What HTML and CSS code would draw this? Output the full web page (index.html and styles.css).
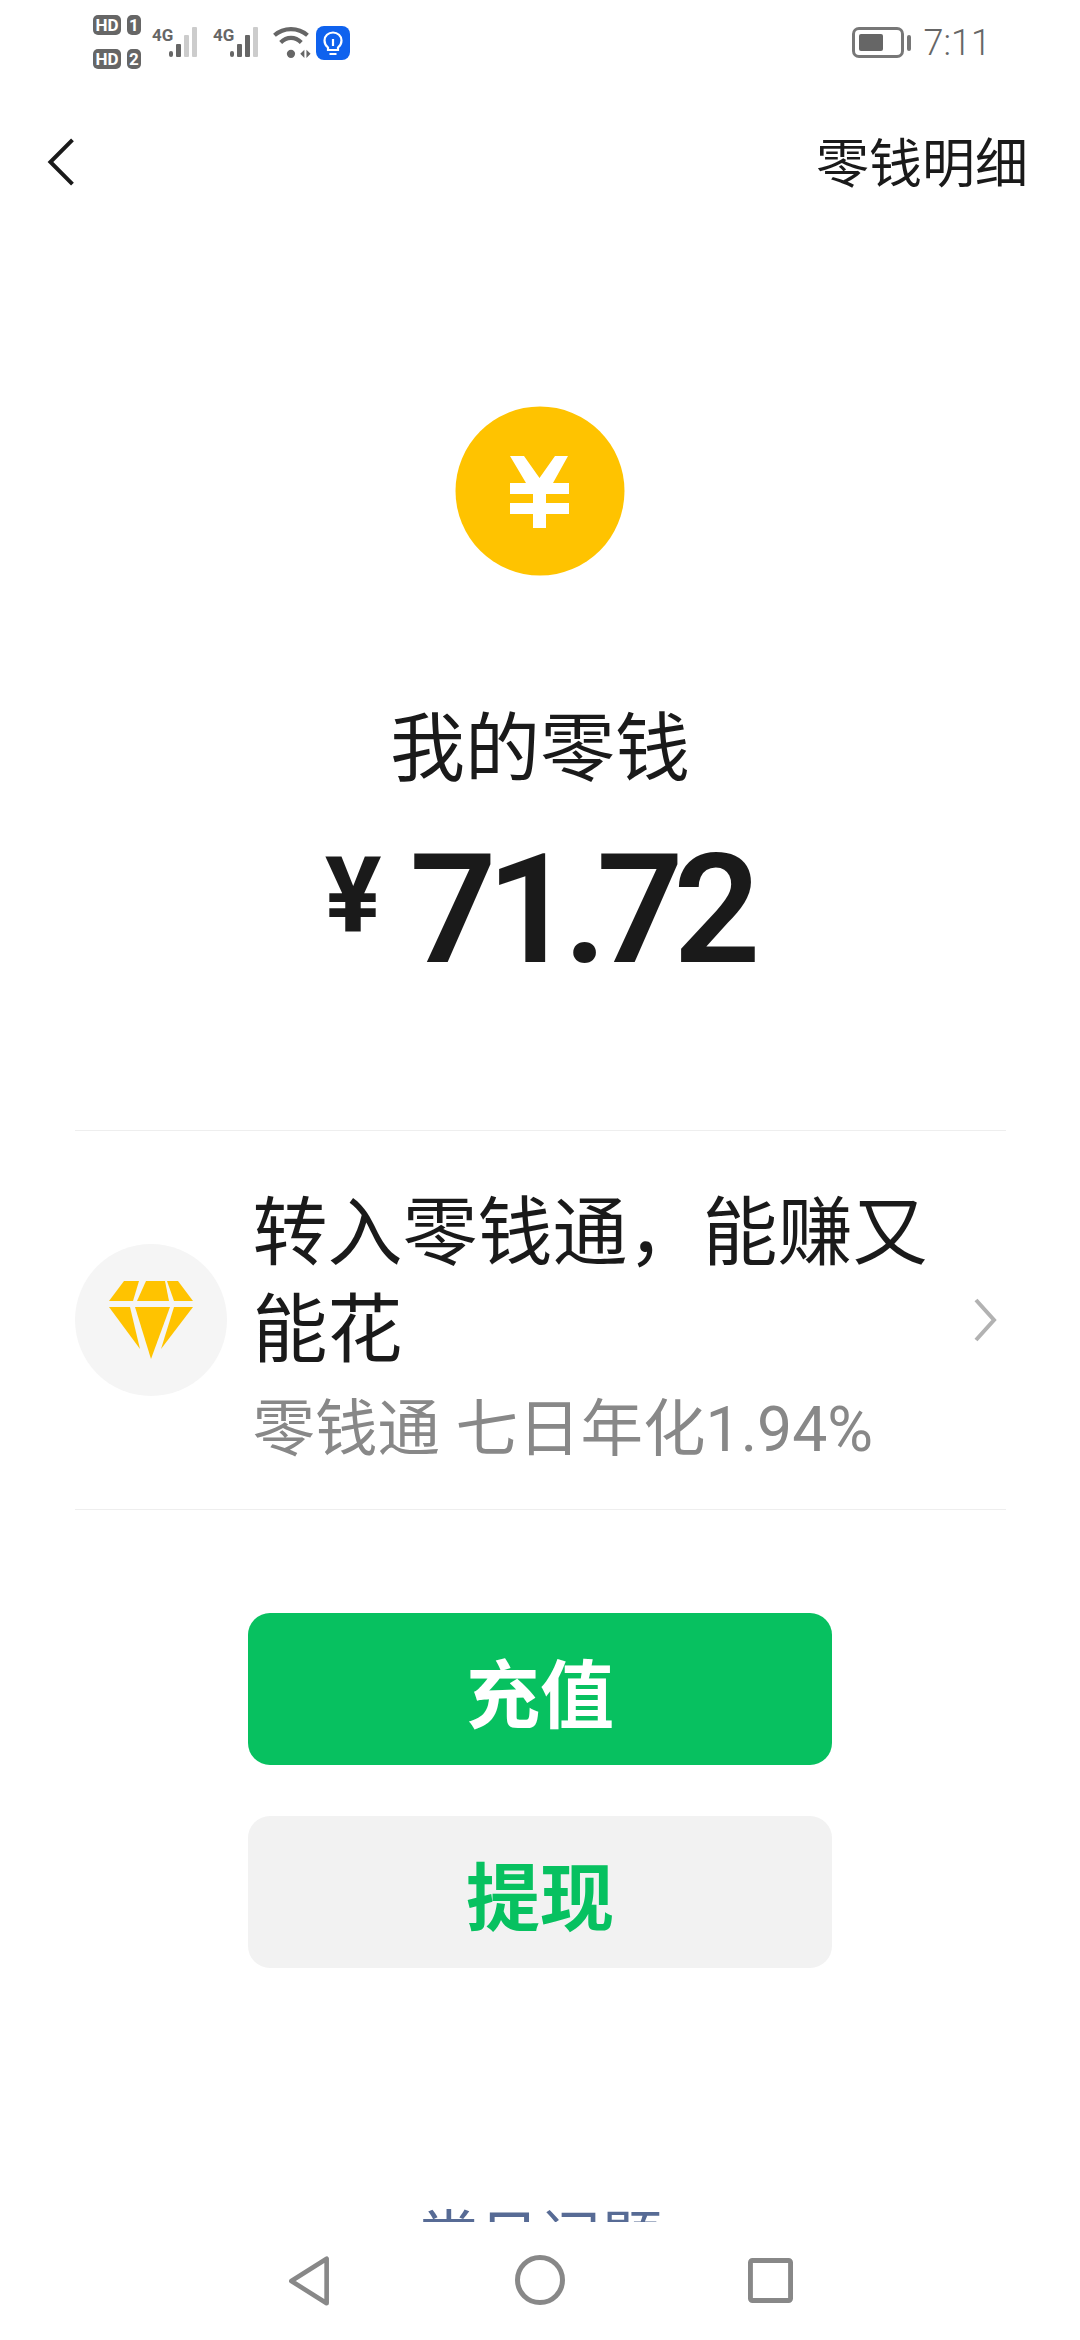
FILE: index.html
```html
<!DOCTYPE html>
<html lang="zh-CN">
<head>
  <meta charset="UTF-8" />
  <title>我的零钱</title>
  <link rel="stylesheet" href="styles.css">
</head>
<body>
  <div class="status-bar">
    <div class="status-left">
      <div class="sim-tags">
        <div class="sim-row"><span class="hd">HD</span><span class="sim-no">1</span></div>
        <div class="sim-row"><span class="hd">HD</span><span class="sim-no">2</span></div>
      </div>
      <div class="signal">
        <span class="net">4G</span>
        <svg class="bars" viewBox="0 0 32 32">
          <rect x="0" y="24" width="4" height="6" rx="2" fill="#666"/>
          <rect x="7" y="17" width="5" height="13" rx="1" fill="#666"/>
          <rect x="15" y="8" width="5" height="22" rx="1" fill="#ccc"/>
          <rect x="23" y="0" width="5" height="30" rx="1" fill="#ccc"/>
        </svg>
      </div>
      <div class="signal">
        <span class="net">4G</span>
        <svg class="bars" viewBox="0 0 32 32">
          <rect x="0" y="24" width="4" height="6" rx="2" fill="#666"/>
          <rect x="7" y="17" width="5" height="13" rx="1" fill="#666"/>
          <rect x="15" y="8" width="5" height="22" rx="1" fill="#666"/>
          <rect x="23" y="0" width="5" height="30" rx="1" fill="#ccc"/>
        </svg>
      </div>
      <svg class="wifi" viewBox="0 0 38 32">
        <path d="M2 9C11 1 25 1 34 9" fill="none" stroke="#666" stroke-width="4"/>
        <path d="M8 16C14 10 22 10 28 16" fill="none" stroke="#666" stroke-width="4"/>
        <circle cx="18" cy="27" r="4" fill="#666"/>
        <path d="M27 27l4-4v8zM37 27l-4-4v8z" fill="#666"/>
      </svg>
      <svg class="bulb" viewBox="0 0 34 34">
        <rect width="34" height="34" rx="8" fill="#0f62ee"/>
        <path d="M12 21.500C9.500 19.500 8.500 17 8.500 14.500C8.500 10 12.300 6.500 17 6.500S25.500 10 25.500 14.500C25.500 17 24.500 19.500 22 21.500V24H12Z" fill="none" stroke="#fff" stroke-width="2.200"/>
        <path d="M13.500 28H20.500M17 13V20" fill="none" stroke="#fff" stroke-width="2.200"/>
      </svg>
    </div>
    <div class="status-right">
      <div class="battery"><div class="battery-level"></div></div>
      <div class="battery-tip"></div>
      <span class="time">7:11</span>
    </div>
  </div>

  <div class="top-bar">
    <svg class="back" viewBox="0 0 34 56">
      <path d="M30 3L5 28L30 53" fill="none" stroke="#1a1a1a" stroke-width="4.500"/>
    </svg>
    <span class="detail-link">零钱明细</span>
  </div>

  <div class="content">
    <svg class="coin" viewBox="0 0 170 170">
      <circle cx="85" cy="85" r="84.500" fill="#ffc300"/>
      <path d="M55 50H69L84.500 72L100 50H113L98 77H114V88H91V97H114V108H91V122H78V108H55V97H78V88H55V77H71Z" fill="#fff"/>
    </svg>
    <div class="balance-label">我的零钱</div>
    <div class="balance"><span class="yen">¥</span><span class="amount">71.72</span></div>

    <div class="promo">
      <div class="promo-icon">
        <svg class="diamond" viewBox="0 0 84 78">
          <path d="M15 0H30L24 20H0Z" fill="#ffc300"/>
          <path d="M37 0H56L60 20H28Z" fill="#ffc300"/>
          <path d="M58 0H69L84 20H65Z" fill="#ffc300"/>
          <path d="M0 26H21L31 68Z" fill="#ffc300"/>
          <path d="M26 26H61L42 78Z" fill="#ffc300"/>
          <path d="M65 26H84L52 68Z" fill="#ffc300"/>
        </svg>
      </div>
      <div class="promo-text">
        <div class="promo-title">转入零钱通&#xFF0C;能赚又能花</div>
        <div class="promo-sub">零钱通 七日年化1.94%</div>
      </div>
      <svg class="chevron" viewBox="0 0 24 44">
        <path d="M3 2L21 22L3 42" fill="none" stroke="#b2b2b2" stroke-width="4"/>
      </svg>
    </div>

    <button class="btn btn-green">充值</button>
    <button class="btn btn-gray">提现</button>

    <div class="faq">常见问题</div>
  </div>

  <div class="nav-bar">
    <svg class="nav-back" viewBox="0 0 46 56">
      <path d="M4 28L42 4V52Z" fill="none" stroke="#888" stroke-width="5" stroke-linejoin="round"/>
    </svg>
    <svg class="nav-home" viewBox="0 0 50 50">
      <circle cx="25" cy="25" r="22.500" fill="none" stroke="#888" stroke-width="5"/>
    </svg>
    <svg class="nav-recent" viewBox="0 0 46 46">
      <rect x="2.500" y="2.500" width="41" height="41" rx="2" fill="none" stroke="#888" stroke-width="5"/>
    </svg>
  </div>
</body>
</html>
```

FILE: styles.css
```css
html, body {
  margin: 0;
  padding: 0;
}

body {
  width: 1080px;
  height: 2340px;
  overflow: hidden;
  background-color: #fff;
  color: #1a1a1a;
  font-family: Roboto, "Noto Sans CJK SC", sans-serif;
  display: flex;
  flex-direction: column;
}

.status-bar {
  height: 80px;
  padding: 14px 89px 0 93px;
  box-sizing: border-box;
  display: flex;
  justify-content: space-between;
  flex-shrink: 0;
}

.status-left {
  display: flex;
  align-items: flex-start;
}

.sim-tags {
  display: flex;
  flex-direction: column;
  gap: 14px;
  margin-top: 1px;
}

.sim-row {
  display: flex;
  gap: 6px;
}

.hd, .sim-no {
  height: 20px;
  background-color: #666;
  color: #fff;
  border-radius: 5px;
  font-size: 17px;
  font-weight: 700;
  line-height: 20px;
  text-align: center;
}

.hd {
  width: 28px;
}

.sim-no {
  width: 14px;
}

.signal {
  position: relative;
  width: 50px;
  height: 32px;
  margin: 13px 0 0 11px;
}

.signal + .signal {
  margin-left: 11px;
}

.net {
  position: absolute;
  left: 0;
  top: 0;
  font-size: 17px;
  font-weight: 700;
  line-height: 16px;
  color: #666;
}

.bars {
  position: absolute;
  right: 0;
  top: 0;
  width: 34px;
  height: 32px;
}

.wifi {
  width: 40px;
  height: 33px;
  margin: 12px 0 0 9px;
}

.bulb {
  width: 34px;
  height: 34px;
  margin: 12px 0 0 4px;
}

.status-right {
  display: flex;
  align-items: flex-start;
  padding-top: 13px;
}

.battery {
  width: 52px;
  height: 31px;
  border: 3px solid #777;
  border-radius: 7px;
  box-sizing: border-box;
  padding: 4px;
}

.battery-level {
  width: 24px;
  height: 100%;
  background-color: #666;
  border-radius: 2px;
}

.battery-tip {
  width: 4px;
  height: 16px;
  margin: 8px 0 0 3px;
  background-color: #777;
  border-radius: 2px;
}

.time {
  margin-left: 13px;
  font-size: 36px;
  font-weight: 300;
  line-height: 32px;
  color: #666;
}

.top-bar {
  height: 170px;
  padding: 0 52px 0 46px;
  display: flex;
  justify-content: space-between;
  align-items: center;
  flex-shrink: 0;
}

.back {
  width: 30px;
  height: 54px;
  margin-bottom: 6px;
}

.detail-link {
  font-size: 53px;
  line-height: 80px;
}

.content {
  flex: 1;
  overflow: hidden;
  display: flex;
  flex-direction: column;
  align-items: center;
}

.coin {
  width: 170px;
  height: 170px;
  margin-top: 156px;
  flex-shrink: 0;
}

.balance-label {
  margin-top: 123px;
  font-size: 75px;
  line-height: 100px;
}

.balance {
  display: flex;
  align-items: flex-start;
  margin-top: 11px;
  padding-right: 5px;
  flex-shrink: 0;
}

.yen {
  margin-top: 36px;
  font-size: 106px;
  font-weight: 700;
  line-height: 100px;
}

.amount {
  margin-left: 28px;
  font-size: 153px;
  font-weight: 600;
  letter-spacing: -10.500px;
  line-height: 200px;
}

.promo {
  width: 931px;
  height: 378px;
  margin-top: 120px;
  border-top: 1px solid #eee;
  border-bottom: 1px solid #eee;
  display: flex;
  align-items: center;
  flex-shrink: 0;
}

.promo-icon {
  width: 152px;
  height: 152px;
  border-radius: 50%;
  background-color: #f5f5f5;
  display: flex;
  justify-content: center;
  align-items: center;
  flex-shrink: 0;
}

.diamond {
  width: 84px;
  height: 78px;
}

.promo-text {
  width: 685px;
  margin-left: 26px;
  padding-top: 15px;
}

.promo-title {
  font-size: 75px;
  line-height: 97px;
}

.promo-sub {
  margin-top: 11px;
  font-size: 62.500px;
  line-height: 80px;
  color: #888;
}

.chevron {
  width: 24px;
  height: 44px;
  margin-left: 35px;
}

.btn {
  width: 584px;
  height: 152px;
  border: none;
  border-radius: 22px;
  font-family: inherit;
  font-size: 74px;
  font-weight: 700;
  flex-shrink: 0;
}

.btn-green {
  margin-top: 103px;
  background-color: #07c160;
  color: #fff;
}

.btn-gray {
  margin-top: 51px;
  background-color: #f2f2f2;
  color: #07c160;
}

.faq {
  margin-top: 232px;
  font-size: 61px;
  line-height: 80px;
  color: #576b95;
  flex-shrink: 0;
}

.nav-bar {
  height: 118px;
  padding: 0 287px;
  background-color: #fff;
  display: flex;
  justify-content: space-between;
  align-items: flex-start;
  flex-shrink: 0;
}

.nav-back {
  width: 44px;
  height: 52px;
  margin-top: 33px;
}

.nav-home {
  width: 50px;
  height: 50px;
  margin-top: 33px;
}

.nav-recent {
  width: 45px;
  height: 45px;
  margin-top: 36px;
}
```
